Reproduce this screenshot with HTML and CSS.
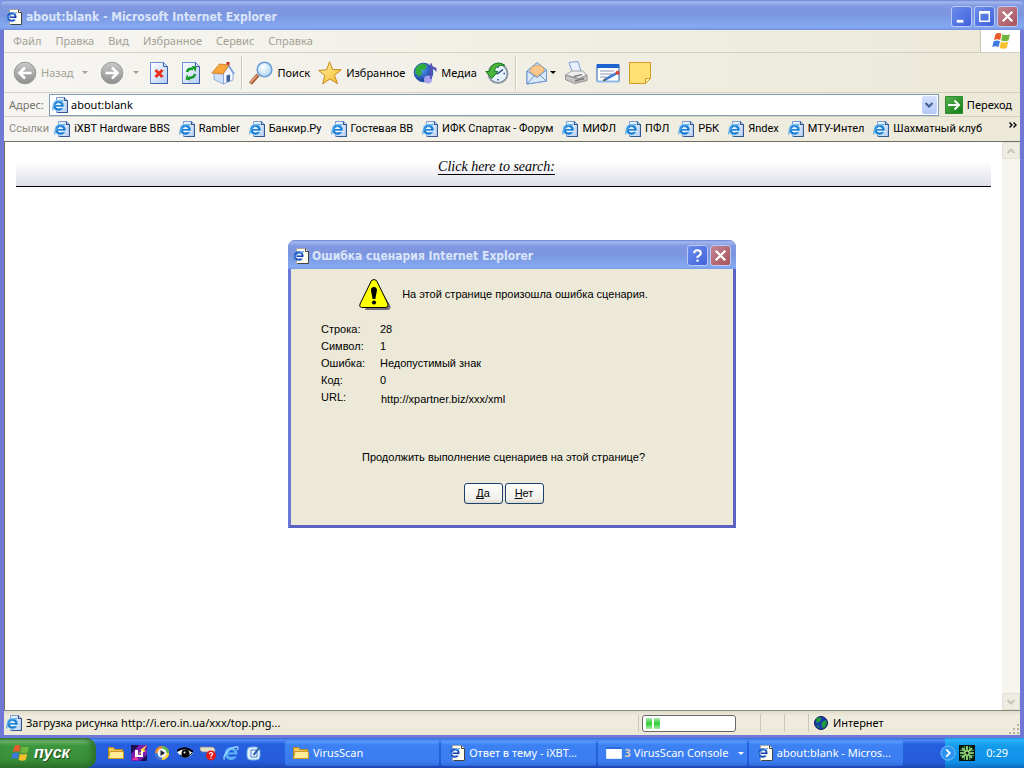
FILE: index.html
```html
<!DOCTYPE html>
<html lang="ru">
<head>
<meta charset="utf-8">
<title>about:blank - Microsoft Internet Explorer</title>
<link rel="stylesheet" href="styles.css">
</head>
<body>
<svg class="defs" aria-hidden="true">
  <defs>
    <linearGradient id="g-page" x1="0" y1="0" x2="1" y2="1"><stop offset="0" stop-color="#fff"/><stop offset="1" stop-color="#b5cdf5"/></linearGradient>
    <linearGradient id="g-gray" x1="0" y1="0" x2="0" y2="1"><stop offset="0" stop-color="#c9c9c9"/><stop offset="1" stop-color="#8e8e8e"/></linearGradient>
    <linearGradient id="g-yellow" x1="0" y1="0" x2="1" y2="1"><stop offset="0" stop-color="#fff6a0"/><stop offset="1" stop-color="#f3b62c"/></linearGradient>
    <linearGradient id="g-green" x1="0" y1="0" x2="1" y2="1"><stop offset="0" stop-color="#55b34e"/><stop offset="1" stop-color="#117a16"/></linearGradient>
    <radialGradient id="g-globe" cx=".35" cy=".3" r=".8"><stop offset="0" stop-color="#5fa9ff"/><stop offset="1" stop-color="#0b2a8c"/></radialGradient>
    <radialGradient id="g-lens" cx=".4" cy=".35" r=".7"><stop offset="0" stop-color="#fff"/><stop offset="1" stop-color="#a9d2f3"/></radialGradient>
  </defs>
  <symbol id="ie-link" viewBox="0 0 16 16">
    <path d="M4.500.5h8l3 3v12h-11z" fill="url(#g-page)" stroke="#7b9bd0"/>
    <path d="M12.500.5v3h3v12h-10" fill="none" stroke="#34588f" stroke-width="1.200"/>
    <circle cx="6.500" cy="8.500" r="6" fill="#9fd2f6"/>
    <circle cx="6.500" cy="8.700" r="3.900" fill="#e8f6ff" stroke="#1c7cd0" stroke-width="2.300"/>
    <path d="M3.500 8.800h7" stroke="#1c7cd0" stroke-width="1.600"/>
    <path d="M8 10.500h5" stroke="#d8eafc" stroke-width="1.400"/>
    <path d="M1 13.500C-.5 10 5 4 11 3.300" fill="none" stroke="#4fa6e8" stroke-width="1.100"/>
  </symbol>
  <symbol id="ie-doc" viewBox="0 0 16 16">
    <path d="M3.500.5h9l3 3v12h-12z" fill="#fffdf0" stroke="#a8a8a0"/>
    <path d="M12.500.5v3h3v12h-11" fill="none" stroke="#444"/>
    <circle cx="5.800" cy="8" r="3.800" fill="#fff" stroke="#1e56c4" stroke-width="2"/>
    <path d="M3.500 8.200h6.500" stroke="#1638a8" stroke-width="1.500"/>
    <path d="M8 9.900h3.500" stroke="#fff" stroke-width="1.500"/>
    <path d="M.7 12.500C0 9 5 4 11 3.500" fill="none" stroke="#4a90e0" stroke-width="1.200"/>
  </symbol>
  <symbol id="flag" viewBox="0 0 20 18">
    <path d="M4.500 2Q7.500.2 10.500 1.800L9.200 8Q6 6.500 3 8z" fill="#ea5a2a"/>
    <path d="M11.500 2.200Q15 4 19 2.200L17.500 8.500Q14 10 10.200 8.500z" fill="#6fb53c"/>
    <path d="M2.700 9.200Q6 7.600 9 9.200L7.600 15Q4.500 13.500 1.200 15z" fill="#3f79dc"/>
    <path d="M10 9.700Q13.500 11.200 17.200 9.700L15.700 16Q12 17.500 8.600 15.800z" fill="#f8c02c"/>
  </symbol>
  <symbol id="folder" viewBox="0 0 16 16">
    <path d="M.5 13.500v-11h5l1.500 2h7.500v9z" fill="#f0c850" stroke="#b08420"/>
    <path d="M.5 13.500L2 6.500h13.500v7z" fill="#ffec98" stroke="#c79a26"/>
  </symbol>
  <symbol id="arrow-r" viewBox="0 0 24 24">
    <circle cx="12" cy="12" r="10.800" fill="url(#g-gray)" stroke="#999"/>
    <path d="M5.500 12h12M12 6.500l5.500 5.500-5.500 5.500" fill="none" stroke="#fff" stroke-width="2.600"/>
  </symbol>
  <symbol id="arrow-l" viewBox="0 0 24 24">
    <circle cx="12" cy="12" r="10.800" fill="url(#g-gray)" stroke="#999"/>
    <path d="M18.500 12h-12M12 6.500L6.500 12l5.500 5.500" fill="none" stroke="#fff" stroke-width="2.600"/>
  </symbol>
  <symbol id="world" viewBox="0 0 16 16">
    <circle cx="8" cy="8" r="6.500" fill="#1838b0" stroke="#0a1a50"/>
    <path d="M3 3.500l4-1.500 1.500 2-2 3-3 1zM9 7l4-2 1 3-2 4-2 1.500-1.500-3zM3 10l3 1 .5 2.500z" fill="#1f9a3a"/>
  </symbol>
</svg>

<div class="window">
  <header class="titlebar">
    <svg class="i16"><use href="#ie-doc"/></svg>
    <h1 class="title">about:blank - Microsoft Internet Explorer</h1>
    <button class="cap" aria-label="Свернуть"><svg viewBox="0 0 20 20"><path d="M5 15h7" stroke="#fff" stroke-width="3"/></svg></button>
    <button class="cap" aria-label="Развернуть"><svg viewBox="0 0 20 20"><path d="M5 6h10v9H5zM5 5h10" fill="none" stroke="#fff" stroke-width="1.500"/><path d="M4.300 5.500h11.400" stroke="#fff" stroke-width="2.500"/></svg></button>
    <button class="cap close" aria-label="Закрыть"><svg viewBox="0 0 20 20"><path d="M5 5l10 10M15 5L5 15" stroke="#fff" stroke-width="2.400"/></svg></button>
  </header>

  <div class="chrome">
    <div class="menurow">
      <nav class="menu">
        <button>Файл</button><button>Правка</button><button>Вид</button><button>Избранное</button><button>Сервис</button><button>Справка</button>
      </nav>
      <div class="throbber"><svg><use href="#flag"/></svg></div>
    </div>

    <div class="toolbar">
      <button class="tool off"><svg class="i24"><use href="#arrow-l"/></svg>Назад<i class="caret"></i></button>
      <button class="tool off fwd" aria-label="Вперед"><svg class="i24"><use href="#arrow-r"/></svg><i class="caret"></i></button>
      <button class="tool" aria-label="Остановить"><svg class="i24" viewBox="0 0 24 24"><path d="M3.500 1.500h13l4 4v17h-17z" fill="url(#g-page)" stroke="#6f8fd0"/><path d="M16.500 1.500v4h4v17h-17" fill="none" stroke="#3d5fa8"/><path d="M8.500 9l7 7M15.500 9l-7 7" stroke="#e8301c" stroke-width="3"/></svg></button>
      <button class="tool" aria-label="Обновить"><svg class="i24" viewBox="0 0 24 24"><path d="M3.500 1.500h13l4 4v17h-17z" fill="url(#g-page)" stroke="#6f8fd0"/><path d="M16.500 1.500v4h4v17h-17" fill="none" stroke="#3d5fa8"/><path d="M8 11q1-4 6-3M16 13q-1 4.500-6 3.500" fill="none" stroke="#129a22" stroke-width="2.400"/><path d="M12.500 5l5 .5-1 5.500zM11.500 19.500l-5-1 1.500-5z" fill="#129a22"/></svg></button>
      <button class="tool" aria-label="Домой"><svg class="i24" viewBox="0 0 24 24"><path d="M15.500 1h3v7h-3z" fill="#c22a22"/><path d="M3 11v7.500l9.500 4.500V12z" fill="#cfe0fb" stroke="#7d9cd4" stroke-width=".8"/><path d="M12.500 23V12l5-7 4.500 7v7z" fill="#eef5ff" stroke="#7d9cd4" stroke-width=".8"/><path d="M.8 12L8.500 3l9.500 1-6 9z" fill="#f7a53c" stroke="#c87820" stroke-width=".8"/><path d="M17.500 4.500L23.300 13" stroke="#7d9cd4" stroke-width="1.500"/><path d="M15.500 14.500l3.500-1v6.500l-3.500 1.300z" fill="#405f9c"/></svg></button>
      <span class="sep"></span>
      <button class="tool"><svg class="i24" viewBox="0 0 24 24"><path d="M1.500 22.500L9 14" stroke="#a85c3c" stroke-width="4"/><path d="M1.500 21.500L8 14.500" stroke="#e8a47c" stroke-width="1.500"/><circle cx="15.500" cy="8.500" r="7.300" fill="url(#g-lens)" stroke="#6d9fd8" stroke-width="1.600"/></svg>Поиск</button>
      <button class="tool"><svg class="i24" viewBox="0 0 24 24"><path d="M11.500.8l3.200 7.700 8.500.3-6.700 5.400 3 8.500-7.500-4.800-7.200 5 2-8.500L.7 9.500l8-.7z" fill="url(#g-yellow)" stroke="#c8891a"/></svg>Избранное</button>
      <button class="tool media"><svg class="i24" viewBox="0 0 24 24"><circle cx="10.500" cy="11.500" r="9.300" fill="url(#g-globe)" stroke="#2458a8"/><path d="M4 5l6-2.500 4 2-2 4-4 1 1 4-3 2-4-4z" fill="#2fae3a"/><circle cx="15" cy="18.500" r="4" fill="#aaa0ee"/><path d="M18 18V2.500" stroke="#5a54b8" stroke-width="1.800"/><path d="M18 2q1 4 5.500 5v4q-2-3-5.500-3z" fill="#5a54b8"/></svg>Медиа</button>
      <button class="tool" aria-label="Журнал"><svg class="i24" viewBox="0 0 24 24"><circle cx="13" cy="12.500" r="9.500" fill="#e6f2fc" stroke="#8d9aa4" stroke-width="2"/><path d="M13 5.500v1.500M20 12.500h-1.500M13 19.500V18M13 12.500l5-4M13 12.500h-2.500" stroke="#254c88" stroke-width="1.500"/><path d="M20 4.500C14-.5 5 2.500 4.500 10.500H.8l6 7 6-7H9.500C10 6 14 3.500 20 4.500z" fill="#4db53c" stroke="#157c1c"/></svg></button>
      <span class="sep"></span>
      <button class="tool mail" aria-label="Почта"><svg class="i24" viewBox="0 0 24 24"><path d="M2 10L12 1.500 21.500 9v11L2 23z" fill="#b9d6f6" stroke="#6d94cc"/><path d="M5 10.500q1-6 7.500-6T19 10l-7 5.500z" fill="#fbc88c" stroke="#e8a860"/><path d="M2 10l10 6.500L21.500 9v11L2 23z" fill="#d8e9fc" stroke="#6d94cc"/><path d="M2 23l7.500-8.500M21.500 20L14.500 14" stroke="#6d94cc" fill="none"/></svg><i class="caret"></i></button>
      <button class="tool" aria-label="Печать"><svg class="i24" viewBox="0 0 24 24"><path d="M5 1.500l9-1 3.500 11H8.500z" fill="#e8f1fd" stroke="#7d9cd4"/><path d="M1.500 14l6-4h11l4.500 4-6 4z" fill="#eee" stroke="#a0a0a0"/><path d="M1.500 14v4.500l9 4 12.500-3V14l-9 4z" fill="#c4c4c4" stroke="#909090"/><path d="M10 15.500l8-1.800M11 20l9-2.500" stroke="#777" stroke-width="1.300"/></svg></button>
      <button class="tool" aria-label="Правка"><svg class="i24" viewBox="0 0 24 24"><path d="M1 3.500h22v17H1z" fill="#fff" stroke="#2458b8"/><path d="M1 3h22v4H1z" fill="#1c64d0"/><path d="M4 10h14M4 13h12M4 16h6" stroke="#8a9ab8"/><path d="M1 20.500h22" stroke="#8fb8f0" stroke-width="2"/><path d="M9 18.500L20 12.500" stroke="#4a80d0" stroke-width="3"/><path d="M7 19.500l3-1" stroke="#553" stroke-width="1.500"/><circle cx="21.500" cy="11.800" r="2" fill="#d8402c"/></svg></button>
      <button class="tool" aria-label="Обсуждение"><svg class="i24" viewBox="0 0 24 24"><path d="M1.500 1.500h21v16l-5 5h-16z" fill="#ffdf72" stroke="#d49c28"/><path d="M17.500 22.500v-5h5z" fill="#fff0b0" stroke="#d49c28"/></svg></button>
    </div>

    <div class="address">
      <label for="addr">Адрес:</label>
      <div class="combo">
        <svg class="i16"><use href="#ie-link"/></svg>
        <input id="addr" type="text" value="about:blank">
        <button class="drop" aria-label="Список адресов"><svg viewBox="0 0 10 8"><path d="M1.500 2L5 5.500 8.500 2" fill="none" stroke="#3f5c94" stroke-width="2"/></svg></button>
      </div>
      <button class="go"><svg viewBox="0 0 18 18"><path d="M.5.500h17v17H.5z" fill="url(#g-green)" stroke="#2c8a30"/><path d="M3 9h11M9.500 4.500L14 9l-4.500 4.500" fill="none" stroke="#fff" stroke-width="2"/></svg>Переход</button>
    </div>

    <nav class="links">
      <span class="links-label">Ссылки</span>
      <a href="#"><svg class="i16"><use href="#ie-link"/></svg>iXBT Hardware BBS</a>
      <a href="#"><svg class="i16"><use href="#ie-link"/></svg>Rambler</a>
      <a href="#"><svg class="i16"><use href="#ie-link"/></svg>Банкир.Ру</a>
      <a href="#"><svg class="i16"><use href="#ie-link"/></svg>Гостевая ВВ</a>
      <a href="#"><svg class="i16"><use href="#ie-link"/></svg>ИФК Спартак - Форум</a>
      <a href="#"><svg class="i16"><use href="#ie-link"/></svg>МИФЛ</a>
      <a href="#"><svg class="i16"><use href="#ie-link"/></svg>ПФЛ</a>
      <a href="#"><svg class="i16"><use href="#ie-link"/></svg>РБК</a>
      <a href="#"><svg class="i16"><use href="#ie-link"/></svg>Яndex</a>
      <a href="#"><svg class="i16"><use href="#ie-link"/></svg>МТУ-Интел</a>
      <a href="#"><svg class="i16"><use href="#ie-link"/></svg>Шахматный клуб</a>
      <button class="more" aria-label="Еще ссылки"><svg viewBox="0 0 8 6"><path d="M.5.500L3 3 .5 5.500M4.500.500L7 3 4.500 5.500" fill="none" stroke="#000" stroke-width="1.400"/></svg></button>
    </nav>
  </div>

  <div class="view">
    <main class="page">
      <div class="banner"><a href="#">Click here to search:</a></div>
    </main>
    <div class="scroll">
      <button aria-label="Вверх"><svg viewBox="0 0 10 8"><path d="M1.500 6L5 2.500 8.500 6" fill="none" stroke="#c6c5ba" stroke-width="2"/></svg></button>
      <button aria-label="Вниз"><svg viewBox="0 0 10 8"><path d="M1.500 2L5 5.500 8.500 2" fill="none" stroke="#c6c5ba" stroke-width="2"/></svg></button>
    </div>
  </div>

  <footer class="status">
    <div class="msg"><svg class="i16"><use href="#ie-link"/></svg>Загрузка рисунка http://i.ero.in.ua/xxx/top.png...</div>
    <div class="prog"><div class="bar" role="progressbar" aria-label="Загрузка"><span></span><span></span></div></div>
    <div class="pane"></div>
    <div class="pane"></div>
    <div class="zone"><svg class="i16"><use href="#world"/></svg>Интернет</div>
    <svg class="grip" viewBox="0 0 12 12"><path d="M9 1h2v2H9zM5 5h2v2H5zM9 5h2v2H9zM1 9h2v2H1zM5 9h2v2H5zM9 9h2v2H9z" fill="#b8b4a2"/></svg>
  </footer>
</div>

<footer class="taskbar">
  <button class="start"><svg><use href="#flag"/></svg>пуск</button>
  <div class="quick">
    <button aria-label="Папка"><svg class="i16"><use href="#folder"/></svg></button>
    <button aria-label="Плеер"><svg class="i16" viewBox="0 0 16 16"><path d="M0 0h16v16H0z" fill="#7a1cae"/><path d="M0 0h8L0 9zM16 16H9l7-6z" fill="#1c0c50"/><path d="M16 0l-7 5 2 1-5 4 9-4-2-1z" fill="#ffe23c"/><path d="M1 15l4-5 2 5z" fill="#e83ca0"/><path d="M4 5h3v5h3V6h2v6H4z" fill="#fff"/></svg></button>
    <button aria-label="Windows Media"><svg class="i16" viewBox="0 0 16 16"><circle cx="8" cy="8" r="7" fill="#f08a2c"/><path d="M8 1a7 7 0 0 1 7 7H8z" fill="#58b848"/><path d="M15 8a7 7 0 0 1-7 7V8z" fill="#f8d43c"/><path d="M8 15a7 7 0 0 1-7-7h7z" fill="#3878d8"/><circle cx="8" cy="8" r="4.500" fill="#f4f4fa"/><path d="M6.500 5l4.500 3-4.500 3z" fill="#223"/></svg></button>
    <button aria-label="Просмотр"><svg class="i16" viewBox="0 0 16 16"><path d="M0 7q8-6 16 1-7 8-13 2z" fill="#fff"/><path d="M0 6q8-6 16 1" fill="none" stroke="#000" stroke-width="2"/><circle cx="8.500" cy="8.500" r="4" fill="#000"/><path d="M3 10q6 5 12-2" fill="none" stroke="#000"/><circle cx="7.500" cy="7.500" r="1" fill="#fff"/></svg></button>
    <button aria-label="Справка"><svg class="i16" viewBox="0 0 16 16"><path d="M0 2h13l2 2v3H2L0 5z" fill="#e4e0d0" stroke="#777" stroke-width=".7"/><circle cx="11" cy="10.500" r="5" fill="#e01c1c"/><path d="M9.500 9q0-1.500 1.500-1.500t1.500 1.400q0 .8-1.500 1.800v.8M11 12.600v1.200" fill="none" stroke="#fff" stroke-width="1.200"/></svg></button>
    <button aria-label="Internet Explorer"><svg class="i16" viewBox="0 0 16 16"><circle cx="8" cy="8.500" r="5" fill="none" stroke="#5cb4f8" stroke-width="2.800"/><path d="M4 8.500h8.500" stroke="#5cb4f8" stroke-width="2"/><path d="M9.500 10.500h6" stroke="#2458d8" stroke-width="1.800"/><path d="M1.500 14.500C-1 11 8 1 14.500 2q1 .5 0 3" fill="none" stroke="#a4dcff" stroke-width="1.300"/></svg></button>
    <button aria-label="Рабочий стол"><svg class="i16" viewBox="0 0 16 16"><rect x="1" y="2" width="13" height="13" rx="4" fill="#e4f2ff" stroke="#6aaaf0"/><path d="M5 5h6v7H5z" fill="#fff" stroke="#3c78c8"/><path d="M7.500 10L14 2" stroke="#2c60b0" stroke-width="2"/></svg></button>
  </div>
  <div class="tasks">
    <button class="task"><svg class="i16"><use href="#folder"/></svg><span>VirusScan</span></button>
    <button class="task"><svg class="i16"><use href="#ie-doc"/></svg><span>Ответ в тему - iXBT...</span></button>
    <button class="task group"><svg class="i16" viewBox="0 0 16 16"><path d="M.5 2.500h15v11H.5z" fill="#fff" stroke="#dce8fc"/><path d="M0 2h16v2H0z" fill="#2c6ae0"/></svg><b>3</b><span>VirusScan Console</span><i class="caret"></i></button>
    <button class="task"><svg class="i16"><use href="#ie-doc"/></svg><span>about:blank - Micros...</span></button>
  </div>
  <div class="tray">
    <button class="expand" aria-label="Показать скрытые значки"><svg viewBox="0 0 18 18"><circle cx="9" cy="9" r="8" fill="#2c94f0" stroke="#7cc4fa"/><path d="M7 5l4 4-4 4" fill="none" stroke="#fff" stroke-width="2"/></svg></button>
    <svg class="i16" viewBox="0 0 16 16"><path d="M0 0h16v16H0z" fill="#08140c"/><path d="M8 1v14M1 8h14M3 3l10 10M13 3L3 13" stroke="#a8f088" stroke-width="1.600"/><path d="M5 1l1 4M11 1l-1 4M1 5l4 1M1 11l4-1M15 5l-4 1M15 11l-4-1M5 15l1-4M11 15l-1-4" stroke="#5cc070"/><circle cx="8" cy="8" r="1.500" fill="#08140c"/></svg>
    <time>0:29</time>
  </div>
</footer>

<div class="overlay">
  <section class="dialog" role="dialog" aria-labelledby="dlg-title">
    <header class="titlebar small">
      <svg class="i16"><use href="#ie-doc"/></svg>
      <h2 class="title" id="dlg-title">Ошибка сценария Internet Explorer</h2>
      <button class="cap" aria-label="Справка"><svg viewBox="0 0 20 20"><path d="M6.500 7.500Q6.500 4.500 10 4.500t3.500 3Q13.500 9 10 11.500v1.200M10 14.300v2.200" fill="none" stroke="#fff" stroke-width="2.200"/></svg></button>
      <button class="cap close" aria-label="Закрыть"><svg viewBox="0 0 20 20"><path d="M5 5l10 10M15 5L5 15" stroke="#fff" stroke-width="2.400"/></svg></button>
    </header>
    <div class="dlg-body">
      <div class="warn">
        <svg viewBox="0 0 32 32"><path d="M17 3.500L31.500 28q.5 4-3 4H6z" fill="#776c78"/><path d="M12.500 2.500Q15 .500 17.500 2.500L29 26q.5 3-2 3.500H2.500Q-.2 29 1 26z" fill="#ff0" stroke="#000"/><path d="M14.900 9q3.200 0 3 3.500l-1.600 8.500h-2.700L12 12.500Q11.800 9 14.900 9z"/><circle cx="15" cy="24.500" r="2.100"/></svg>
        <p>На этой странице произошла ошибка сценария.</p>
      </div>
      <table class="info">
        <tr><th scope="row">Строка:</th><td>28</td></tr>
        <tr><th scope="row">Символ:</th><td>1</td></tr>
        <tr><th scope="row">Ошибка:</th><td>Недопустимый знак</td></tr>
        <tr><th scope="row">Код:</th><td>0</td></tr>
        <tr><th scope="row">URL:</th><td class="url">http://xpartner.biz/xxx/xml</td></tr>
      </table>
      <p class="ask">Продолжить выполнение сценариев на этой странице?</p>
      <div class="actions"><button><u>Д</u>а</button><button><u>Н</u>ет</button></div>
    </div>
  </section>
</div>
</body>
</html>
```
FILE: styles.css
```css
* { box-sizing: border-box; }
body {
  margin: 0;
  min-height: 100vh;
  display: flex;
  flex-direction: column;
  background: #7b9ae6;
  color: #000;
  font: 11px/14px "Noto Sans", sans-serif;
}
button {
  font: inherit;
  color: inherit;
  background: none;
  border: 0;
  padding: 0;
  white-space: nowrap;
}
h1, h2, p { margin: 0; }
u { text-decoration-skip-ink: none; }
svg { display: block; flex: none; }
.defs { position: absolute; width: 0; height: 0; }
.i16 { width: 16px; height: 16px; }
.i24 { width: 24px; height: 24px; }
.caret {
  border: 3px solid transparent;
  border-top-color: currentColor;
  border-bottom: 0;
}

/* window frame */
.window {
  flex: 1;
  display: flex;
  flex-direction: column;
  border: solid #7078d6;
  border-width: 0 4px 3px;
  border-radius: 7px 7px 0 0;
  background: #ece9d8;
}
.titlebar {
  display: flex;
  align-items: center;
  gap: 2px;
  height: 30px;
  margin: 0 -4px;
  padding: 3px 6px 0 6px;
  border-radius: 7px 7px 0 0;
  background: linear-gradient(#6d82d2 0, #a2b8ee 2px, #8099e0 6px, #7b95de 14px, #7f9ee8 20px, #84aaf2 27px, #7890e0 30px);
}
.title {
  flex: 1;
  padding-left: 2px;
  color: #dbe5fa;
  font: bold 12px/16px "DejaVu Sans Condensed", sans-serif;
  white-space: nowrap;
}
.cap {
  width: 21px;
  height: 21px;
  border: 1px solid #b9c9f3;
  border-radius: 3px;
  background: linear-gradient(135deg, #6c8cec, #3f62dc);
}
.cap.close { background: linear-gradient(135deg, #c48692, #a8525c); }
.cap svg { width: 19px; height: 19px; }

/* toolbars */
.chrome {
  background: linear-gradient(90deg, #f6f5f2, #ece9d8);
  border-bottom: 1px solid #716f64;
}
.menurow {
  display: flex;
  height: 23px;
  border-bottom: 1px solid #d4d1c2;
}
.menu {
  flex: 1;
  display: flex;
  align-items: center;
  gap: 14px;
  padding-left: 9px;
  color: #a3a194;
}
.throbber {
  width: 40px;
  display: grid;
  place-items: center;
  background: #fff;
  border-left: 1px solid #c8c5b6;
}
.throbber svg { width: 20px; height: 18px; }
.toolbar {
  display: flex;
  align-items: center;
  gap: 8px;
  height: 40px;
  padding-left: 9px;
  border-bottom: 1px solid #d4d1c2;
}
.tool {
  display: flex;
  align-items: center;
  gap: 4px;
  height: 34px;
}
.tool.off { color: #a3a194; }
.tool.off .caret { margin-left: 5px; }
.tool.fwd { margin-left: 4px; }
.tool.mail { gap: 1px; margin-left: 2px; }
.sep {
  width: 2px;
  height: 34px;
  border-left: 1px solid #cbc8b9;
  border-right: 1px solid #fff;
  margin: 0 -2px;
}
.address {
  display: flex;
  align-items: center;
  height: 24px;
  padding: 0 8px 0 5px;
  border-bottom: 1px solid #d4d1c2;
}
.address label { width: 40px; color: #77756a; }
.combo {
  flex: 1;
  display: flex;
  align-items: center;
  height: 22px;
  padding: 0 1px 0 2px;
  border: 1px solid #7f9db9;
  background: #fff;
}
.combo input {
  flex: 1;
  border: 0;
  outline: 0;
  padding: 0 3px;
  background: none;
  font: inherit;
}
.drop {
  display: grid;
  place-items: center;
  width: 15px;
  height: 18px;
  border-radius: 2px;
  background: linear-gradient(#d6e1fd, #b4c8f6);
}
.drop svg, .scroll svg { width: 10px; height: 8px; }
.go {
  display: flex;
  align-items: center;
  gap: 4px;
  margin-left: 6px;
}
.go svg { width: 18px; height: 18px; }
.links {
  display: flex;
  align-items: center;
  gap: 9px;
  height: 24px;
  padding: 0 5px;
  font-family: Roboto, sans-serif;
}
.links-label { color: #8d8b80; margin-right: -4px; }
.links a {
  display: flex;
  align-items: center;
  gap: 4px;
  color: inherit;
  text-decoration: none;
  white-space: nowrap;
}
.more { margin: 0 -2px 8px auto; }
.more svg { width: 8px; height: 6px; }

/* page */
.view {
  flex: 1;
  display: flex;
  background: #fff;
  border-left: 1px solid #716f64;
}
.page { flex: 1; padding: 13px 11px; }
.banner {
  height: 32px;
  display: flex;
  justify-content: center;
  padding: 5px 14px 0 0;
  border-bottom: 1px solid #000;
  background: linear-gradient(#fff 20%, #dedeea);
}
.banner a {
  height: 15px;
  border-bottom: 1px solid #000;
  color: #000;
  font: italic 14px/14px "Liberation Serif", serif;
  text-decoration: none;
}
.scroll {
  width: 18px;
  display: flex;
  flex-direction: column;
  justify-content: space-between;
  background: #f6f5ef;
}
.scroll button {
  display: grid;
  place-items: center;
  height: 17px;
  border: 1px solid #e3e1d5;
  border-radius: 2px;
  background: #efede3;
}
.status {
  display: flex;
  align-items: center;
  height: 25px;
  border-top: 1px solid #8a887c;
  background: linear-gradient(#dedbca, #efecde 5px, #ece9d8);
}
.msg {
  flex: 1;
  display: flex;
  align-items: center;
  gap: 4px;
  padding-left: 2px;
}
.prog {
  width: 122px;
  padding-left: 3px;
  border-left: 1px solid #cbc8b9;
}
.bar {
  display: flex;
  gap: 2px;
  width: 94px;
  height: 17px;
  padding: 2px 3px;
  border: 1px solid #686868;
  border-radius: 3px;
  background: #fff;
}
.bar span { width: 6px; background: linear-gradient(#a9eaa9, #2fcf36, #a9eaa9); }
.pane, .zone { height: 18px; border-left: 1px solid #cbc8b9; }
.pane { width: 24px; }
.zone {
  width: 200px;
  display: flex;
  align-items: center;
  gap: 4px;
  padding-left: 4px;
}
.grip { width: 12px; height: 12px; align-self: flex-end; }

/* taskbar */
.taskbar {
  display: flex;
  height: 30px;
  color: #fff;
  background: linear-gradient(#3168d5 0, #4d8df5 2px, #2660e0 6px, #245bdb 24px, #1c46b0 30px);
}
.start {
  display: flex;
  align-items: center;
  gap: 4px;
  width: 96px;
  padding-left: 10px;
  border-radius: 0 10px 10px 0;
  background: linear-gradient(#2f7c2f 0, #72b972 3px, #3c963c 8px, #398f39 22px, #2b6f2b 30px);
  box-shadow: inset -4px 0 6px #2b6f2b;
  font: italic bold 16px/20px "Liberation Sans", sans-serif;
  text-shadow: 1px 1px 1px #1c4a1c;
}
.start svg { width: 20px; height: 18px; }
.quick {
  display: flex;
  align-items: center;
  gap: 7px;
  width: 189px;
  padding-left: 12px;
}
.tasks {
  flex: 1;
  display: flex;
  align-items: center;
  gap: 2px;
  padding-right: 42px;
}
.task {
  flex: 1;
  min-width: 0;
  display: flex;
  align-items: center;
  gap: 4px;
  height: 25px;
  padding: 0 8px;
  border-radius: 2px;
  background: linear-gradient(#5e9bfb, #3c81f3 4px, #3a7cf0 21px, #2f68d8);
  overflow: hidden;
}
.task b { color: #dccfc0; }
.group { gap: 3px; padding: 0 3px 0 8px; }
.group .caret { margin-left: auto; }
.tray {
  display: flex;
  align-items: center;
  gap: 3px;
  width: 79px;
  padding-right: 16px;
  background: linear-gradient(#1c98ee 0, #2cb4f6 2px, #129aec 8px, #1190e8 24px, #0c6cc0 30px);
}
.expand { margin-left: -5px; }
.expand svg { width: 16px; height: 16px; }
.tray time { margin-left: auto; }

/* error dialog */
.overlay {
  position: fixed;
  inset: 0;
  display: grid;
  place-items: center;
}
.dialog {
  width: 448px;
  border: solid #6b78d8;
  border-width: 0 3px 3px;
  border-right-color: #5a62c4;
  border-bottom-color: #5a62c4;
  border-radius: 7px 7px 0 0;
  background: #ece9d8;
}
.small {
  height: 29px;
  margin: 0 -3px;
  padding: 2px 5px 0;
}
.small .title { padding-left: 1px; }
.dlg-body {
  padding: 9px 17px 21px 0;
  font: 11px/13px "Liberation Sans", sans-serif;
}
.warn {
  display: flex;
  align-items: center;
  justify-content: center;
  gap: 11px;
}
.warn svg { width: 32px; height: 32px; }
.warn p { padding-top: 1px; }
.info {
  margin: 11px 0 0 30px;
  border-spacing: 0;
}
.info th, .info td {
  height: 17px;
  padding: 0;
  text-align: left;
  font-weight: normal;
}
.info th { width: 59px; }
.info .url { padding: 4px 0 0 1px; }
.ask { margin-top: 45px; text-align: center; }
.actions {
  display: flex;
  justify-content: center;
  gap: 2px;
  margin-top: 19px;
}
.actions button {
  width: 39px;
  height: 21px;
  border: 1px solid #1c4070;
  border-radius: 3px;
  background: linear-gradient(#fff, #f0efe8 80%, #dcd8cc);
}
```
